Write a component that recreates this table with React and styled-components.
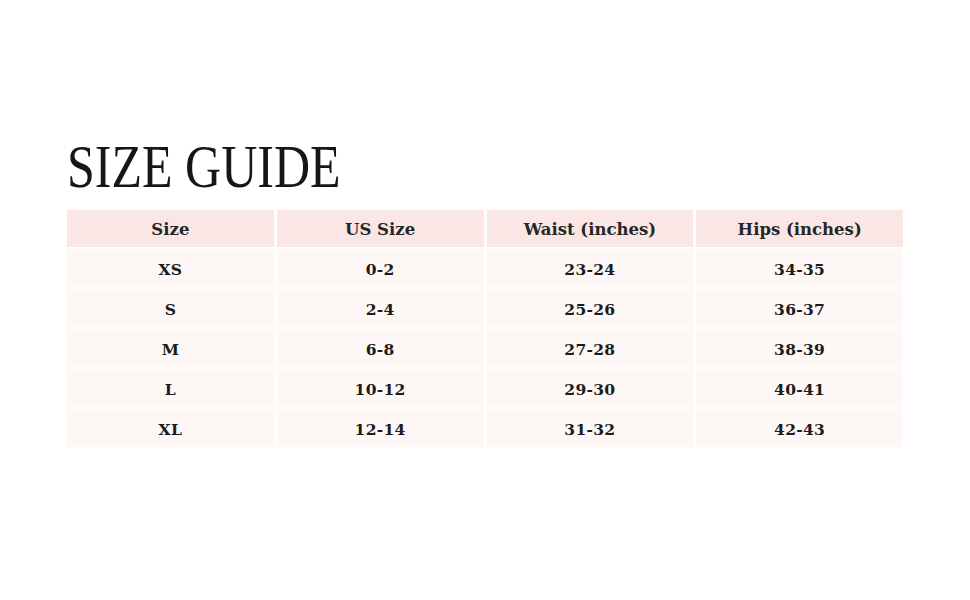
import styled, { createGlobalStyle } from 'styled-components';

const GlobalStyle = createGlobalStyle`
    body {
        margin: 0;
        background: #ffffff;
        font-family: "DejaVu Serif", "Liberation Serif", serif;
        color: #1a1a1a;
    }
`;

const Page = styled.main`
    width: 970px;
    height: 600px;
    box-sizing: border-box;
    padding: 138px 67px 0 67px;
`;

const Title = styled.h1`
    margin: 0 0 14px 0;
    font-family: "Liberation Serif", serif;
    font-weight: 400;
    font-size: 61px;
    line-height: 58px;
    letter-spacing: 0;
    color: #161616;
    transform: scaleX(0.82);
    transform-origin: left center;
`;

const Table = styled.div`
    display: grid;
    grid-template-columns: repeat(4, 1fr);
    column-gap: 3px;
    row-gap: 2px;
    width: 836px;
`;

const Cell = styled.div`
    height: ${p => (p.$head ? '37px' : '38px')};
    box-sizing: border-box;
    padding-top: 2px;
    display: flex;
    align-items: center;
    justify-content: center;
    background: ${p => (p.$head ? '#fae6e4' : '#fdf7f5')};
    font-size: ${p => (p.$head ? '16.5px' : '15.5px')};
    font-weight: 700;
    letter-spacing: ${p => (p.$head ? '0' : '0.3px')};
    color: ${p => (p.$head ? '#262626' : '#1b1b1b')};
`;

const head = ['Size', 'US Size', 'Waist (inches)', 'Hips (inches)'];
const rows = [
    ['XS', '0-2', '23-24', '34-35'],
    ['S', '2-4', '25-26', '36-37'],
    ['M', '6-8', '27-28', '38-39'],
    ['L', '10-12', '29-30', '40-41'],
    ['XL', '12-14', '31-32', '42-43'],
];

export default function App() {
    return (
        <>
            <GlobalStyle />
            <Page>
                <Title>SIZE GUIDE</Title>
                <Table>
                    {head.map(h => (
                        <Cell key={h} $head>{h}</Cell>
                    ))}
                    {rows.map(r =>
                        r.map((v, i) => <Cell key={r[0] + i}>{v}</Cell>)
                    )}
                </Table>
            </Page>
        </>
    );
}
